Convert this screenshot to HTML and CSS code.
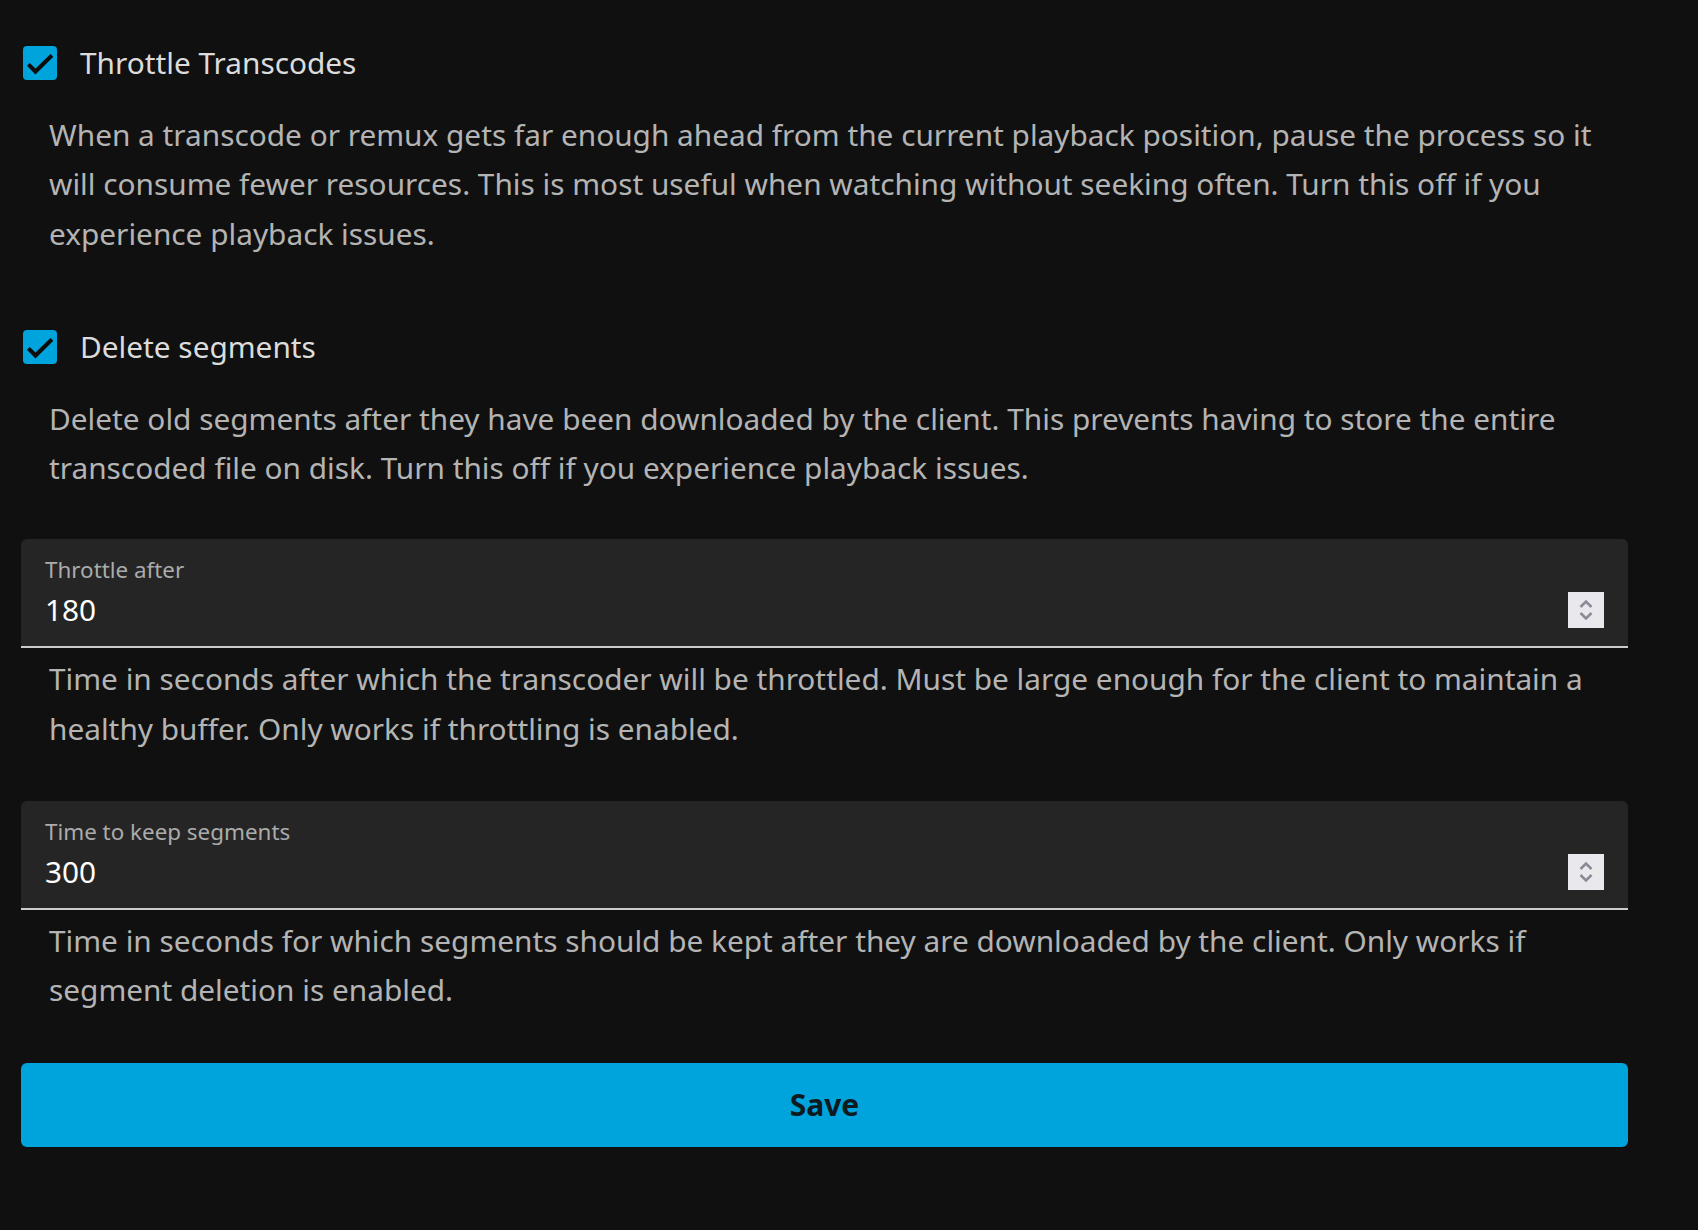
FILE: index.html
```html
<!DOCTYPE html>
<html lang="en">
<head>
<meta charset="utf-8">
<title>Transcoding settings</title>
<link rel="stylesheet" href="styles.css">
</head>
<body>
<form class="settings">
  <div class="check-field">
    <label class="check-row">
      <span class="checkbox"><svg viewBox="0 0 24 24" width="34" height="34"><polyline points="3.8,13 8.8,18 20.4,6.6" fill="none" stroke="#0c0c0c" stroke-width="2.9"/></svg></span>
      <span class="check-title">Throttle Transcodes</span>
    </label>
    <p class="desc">When a transcode or remux gets far enough ahead from the current playback position, pause the process so it will consume fewer resources. This is most useful when watching without seeking often. Turn this off if you experience playback issues.</p>
  </div>

  <div class="check-field">
    <label class="check-row">
      <span class="checkbox"><svg viewBox="0 0 24 24" width="34" height="34"><polyline points="3.8,13 8.8,18 20.4,6.6" fill="none" stroke="#0c0c0c" stroke-width="2.9"/></svg></span>
      <span class="check-title">Delete segments</span>
    </label>
    <p class="desc">Delete old segments after they have been downloaded by the client. This prevents having to store the entire transcoded file on disk. Turn this off if you experience playback issues.</p>
  </div>

  <div class="input-field">
    <div class="input-box">
      <div class="input-label">Throttle after</div>
      <div class="input-row">
        <span class="input-value">180</span>
        <span class="spinner"><svg viewBox="0 0 36 36" width="36" height="36"><polyline points="12.5,15 18,9.5 23.5,15" fill="none" stroke="#8b8b98" stroke-width="2.6"/><polyline points="12.5,21 18,26.5 23.5,21" fill="none" stroke="#8b8b98" stroke-width="2.6"/></svg></span>
      </div>
    </div>
    <p class="desc help">Time in seconds after which the transcoder will be throttled. Must be large enough for the client to maintain a healthy buffer. Only works if throttling is enabled.</p>
  </div>

  <div class="input-field">
    <div class="input-box">
      <div class="input-label">Time to keep segments</div>
      <div class="input-row">
        <span class="input-value">300</span>
        <span class="spinner"><svg viewBox="0 0 36 36" width="36" height="36"><polyline points="12.5,15 18,9.5 23.5,15" fill="none" stroke="#8b8b98" stroke-width="2.6"/><polyline points="12.5,21 18,26.5 23.5,21" fill="none" stroke="#8b8b98" stroke-width="2.6"/></svg></span>
      </div>
    </div>
    <p class="desc help">Time in seconds for which segments should be kept after they are downloaded by the client. Only works if segment deletion is enabled.</p>
  </div>

  <button type="button" class="save">Save</button>
</form>
</body>
</html>
```

FILE: styles.css
```css
html, body {
  margin: 0;
  padding: 0;
  background: #101010;
}

body {
  font-family: "Noto Sans", "Open Sans", sans-serif;
  color: #dddddd;
}

.settings {
  width: 1607px;
  padding: 46px 0 0 21px;
  display: flex;
  flex-direction: column;
}

.check-field {
  margin-bottom: 72px;
}

.check-field + .check-field {
  margin-bottom: 47px;
}

.check-row {
  display: flex;
  align-items: center;
  height: 34px;
}

.checkbox {
  width: 34px;
  height: 34px;
  margin-left: 2px;
  border-radius: 4px;
  background: #00a4dc;
  display: flex;
  align-items: center;
  justify-content: center;
  flex-shrink: 0;
}

.checkbox svg {
  display: block;
}

.check-title {
  margin-left: 23px;
  font-size: 29.8px;
  color: #dcdcdc;
  line-height: 34px;
}

.desc {
  margin: 30px 0 0 0;
  padding-left: 28px;
  font-size: 29.8px;
  line-height: 49.3px;
  color: #b4b4b4;
}

.input-field {
  margin-bottom: 48px;
}

.input-field + .input-field {
  margin-bottom: 48px;
}

.input-box {
  background: #252525;
  border-radius: 6px 6px 0 0;
  border-bottom: 2px solid #cccccc;
  padding: 17px 24px 18px 24px;
  box-sizing: border-box;
  height: 109px;
}

.input-label {
  font-size: 22.4px;
  line-height: 28px;
  color: #ababab;
}

.input-row {
  margin-top: 8px;
  height: 36px;
  display: flex;
  align-items: center;
  justify-content: space-between;
}

.input-value {
  font-size: 29.8px;
  line-height: 36px;
  color: #ffffff;
}

.spinner {
  width: 36px;
  height: 36px;
  background: #e9e9ed;
  display: block;
}

.spinner svg {
  display: block;
}

.help {
  margin-top: 6px;
}

.save {
  height: 84px;
  border: none;
  border-radius: 6px;
  background: #00a4dc;
  color: #0d1a20;
  font-family: "Noto Sans", "Open Sans", sans-serif;
  font-weight: 700;
  font-size: 30px;
  cursor: pointer;
}
```
